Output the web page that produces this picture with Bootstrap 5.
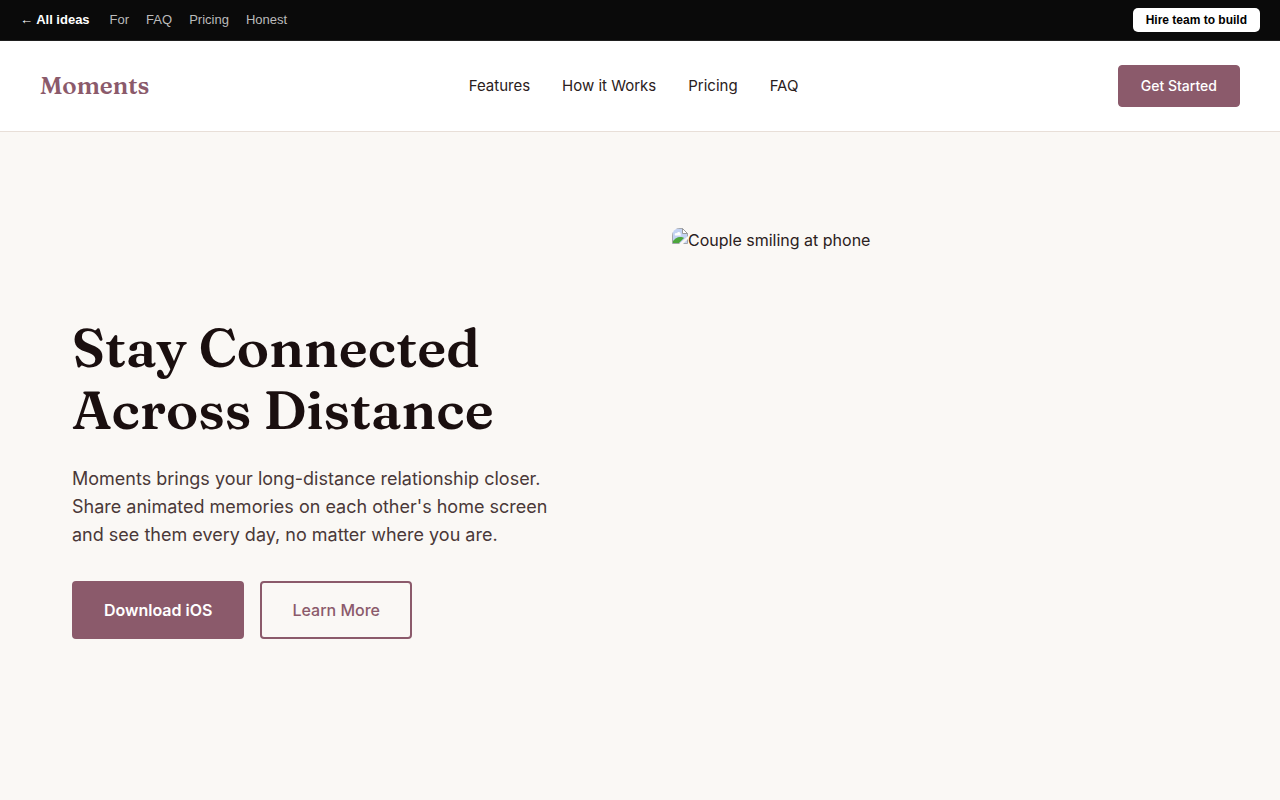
<!DOCTYPE html>
<html lang="en">
<head>
<meta charset="utf-8">
<meta name="viewport" content="width=device-width, initial-scale=1">
<title>Moments</title>
<link href="https://cdn.jsdelivr.net/npm/bootstrap@5.3.0/dist/css/bootstrap.min.css" rel="stylesheet">
<style>
:root { --plum: #8b5a6b; --ink: #1a0f0f; --paper: #faf8f5; }
body { font-family: Inter, sans-serif; font-size: 16px; line-height: 24px; color: #2a2020; background: var(--paper); }
.ideas-bar { font-family: "Liberation Sans", Arial, sans-serif; font-size: 13px; line-height: 20px; background: #0a0a0a; border-bottom: 1px solid #1f1f1f; padding: 8px 20px; }
.ideas-links { column-gap: 17px; }
.ideas-links a { color: #bbb; }
.ideas-links .home-link { color: #fff; margin-right: 3px; }
.hire-btn { font-family: inherit; font-size: 12px; line-height: 16px; padding: 4px 13px; border: 0; border-radius: 5px; }
.site-header { border-bottom: 1px solid #e8dfd8; padding: 24px 40px; }
.brand-name { font-family: Fraunces, "Liberation Serif", serif; font-size: 24px; line-height: 30px; font-weight: 600; color: var(--plum); }
.site-nav { gap: 32px; font-size: 15px; }
.site-nav a { color: #2a2020; }
.btn-plum { --bs-btn-color: #fff; --bs-btn-bg: var(--plum); --bs-btn-border-color: var(--plum); --bs-btn-hover-color: #fff; --bs-btn-hover-bg: #754a59; --bs-btn-hover-border-color: #754a59; border-radius: 4px; }
.btn-plum-line { --bs-btn-color: var(--plum); --bs-btn-border-color: var(--plum); --bs-btn-hover-color: #fff; --bs-btn-hover-bg: var(--plum); --bs-btn-hover-border-color: var(--plum); border-radius: 4px; }
.start-btn { font-size: 14px; line-height: 20px; font-weight: 500; padding: 10px 22px; }
.hero { max-width: 1200px; padding: 96px 32px; }
.hero-row { --bs-gutter-x: 64px; --bs-gutter-y: 48px; }
.hero h1 { font-family: Fraunces, "Liberation Serif", serif; font-size: 54px; line-height: 62px; font-weight: 600; color: var(--ink); margin-bottom: 24px; }
.hero-text { max-width: 480px; font-size: 18px; line-height: 28px; color: #4a3838; margin-bottom: 32px; }
.hero-btn { font-size: 16px; line-height: 24px; border-width: 2px; padding: 15px 30px; }
.photo { min-height: 500px; border-radius: 8px; overflow: hidden; }
</style>
</head>
<body>
<div class="ideas-bar d-flex flex-wrap align-items-center justify-content-between">
  <nav class="ideas-links d-flex flex-wrap" aria-label="Ideas">
    <a class="home-link fw-bold text-decoration-none" href="#">← All ideas</a>
    <a class="text-decoration-none" href="#for">For</a>
    <a class="text-decoration-none" href="#faq">FAQ</a>
    <a class="text-decoration-none" href="#pricing">Pricing</a>
    <a class="text-decoration-none" href="#honest">Honest</a>
  </nav>
  <button type="button" class="hire-btn btn btn-light bg-white text-black fw-bold">Hire team to build</button>
</div>
<header class="site-header bg-white d-flex flex-wrap align-items-center justify-content-between gap-3">
  <a class="brand-name text-decoration-none" href="#">Moments</a>
  <nav class="site-nav d-flex flex-wrap" aria-label="Main">
    <a class="text-decoration-none" href="#features">Features</a>
    <a class="text-decoration-none" href="#how">How it Works</a>
    <a class="text-decoration-none" href="#pricing">Pricing</a>
    <a class="text-decoration-none" href="#faq">FAQ</a>
  </nav>
  <button type="button" class="btn btn-plum start-btn">Get Started</button>
</header>
<main class="hero container-fluid">
  <div class="row hero-row align-items-center">
    <div class="col-lg-6">
      <h1>Stay Connected Across Distance</h1>
      <p class="hero-text">Moments brings your long-distance relationship closer. Share animated memories on each other's home screen and see them every day, no matter where you are.</p>
      <div class="d-flex flex-wrap gap-3">
        <button type="button" class="btn btn-plum hero-btn fw-semibold">Download iOS</button>
        <button type="button" class="btn btn-plum-line hero-btn fw-medium">Learn More</button>
      </div>
    </div>
    <div class="col-lg-6">
      <div class="photo d-flex align-items-start">
        <svg class="flex-shrink-0" width="16" height="16" viewBox="0 0 16 16" aria-hidden="true">
          <path d="M.5.5h10l5 5v10H.5z" fill="#c3d3f3" stroke="#a3a6ab"/>
          <path d="M3 7.500c-1-2 1-3 2-2 .5-2 4-2 3.500 1 1 0 1 1 0 1z" fill="#fff"/>
          <path d="M1 15v-2c2-2 4-4 7-4 2 0 3 0 4 1l-5 5z" fill="#4ca63c"/>
          <path d="M10.500.5v5h5z" fill="#fff" stroke="#9a9a9a"/>
          <path d="M7 16l9-8v3l-5 5z" fill="#faf8f5"/>
        </svg>
        <span>Couple smiling at phone</span>
      </div>
    </div>
  </div>
</main>
<script src="https://cdn.jsdelivr.net/npm/bootstrap@5.3.0/dist/js/bootstrap.bundle.min.js"></script>
</body>
</html>
